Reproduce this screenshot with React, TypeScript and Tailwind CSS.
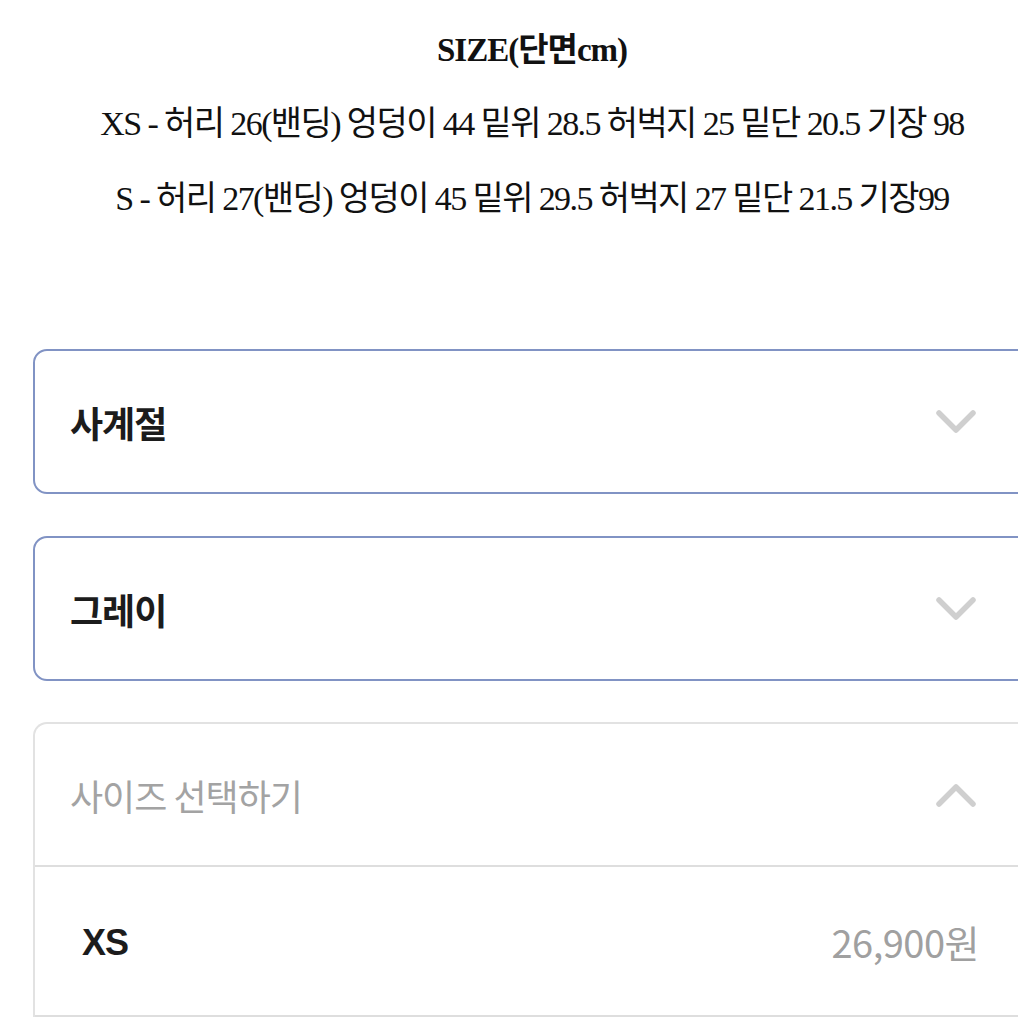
const serif = { fontFamily: '"Liberation Serif", "Noto Sans CJK KR", serif' };
const sans = { fontFamily: '"Noto Sans CJK KR", "Liberation Sans", sans-serif' };
const latin = { fontFamily: '"Liberation Sans", "Noto Sans CJK KR", sans-serif' };

const sizeRows = [
  "XS - 허리 26(밴딩) 엉덩이 44 밑위 28.5 허벅지 25 밑단 20.5 기장 98",
  "S - 허리 27(밴딩) 엉덩이 45 밑위 29.5 허벅지 27 밑단 21.5 기장99",
];

function Chevron({ up }: { up?: boolean }) {
  return (
    <svg width="40" height="26" viewBox="0 0 40 26" className="shrink-0">
      <polyline
        points={up ? "3,22 20,5 37,22" : "3,4 20,21 37,4"}
        fill="none"
        stroke="#cfcfcf"
        strokeWidth="5.5"
        strokeLinecap="round"
        strokeLinejoin="round"
      />
    </svg>
  );
}

function SelectBox({ label }: { label: string }) {
  return (
    <div className="h-[145px] rounded-[14px] border-2 border-[#8193c4] bg-white flex items-center justify-between pl-[35px] pr-[53px]">
      <span className="text-[36px] font-bold text-[#1c1c1c] tracking-[-1px]" style={sans}>
        {label}
      </span>
      <Chevron />
    </div>
  );
}

export default function App() {
  return (
    <div className="w-[1018px] h-[1018px] overflow-hidden bg-white">
      <div className="ml-[33px] w-[998px]">
        {/* Size table */}
        <div className="flex flex-col items-center text-[#111]" style={serif}>
          <h2 className="mt-[32px] text-[33px] font-bold tracking-[-1px] leading-[36px]">SIZE(단면cm)</h2>
          <p className="mt-[38px] text-[34px] tracking-[-1.6px] leading-[36px]">{sizeRows[0]}</p>
          <p className="mt-[39px] text-[34px] tracking-[-1.6px] leading-[36px]">{sizeRows[1]}</p>
        </div>

        {/* Option selectors */}
        <div className="mt-[132px] flex flex-col gap-[42px]">
          <SelectBox label="사계절" />
          <SelectBox label="그레이" />
        </div>

        <div className="mt-[41px] rounded-t-[14px] border-2 border-b-0 border-[#e2e2e2] bg-white">
          <div className="h-[143px] flex items-center justify-between pl-[35px] pr-[53px] border-b-2 border-[#dedede]">
            <span className="text-[36px] text-[#a3a3a3] tracking-[-1px]" style={sans}>
              사이즈 선택하기
            </span>
            <Chevron up />
          </div>
          <div className="h-[150px] flex items-center justify-between pl-[47px] pr-[50px] border-b-2 border-[#dedede]">
            <span className="text-[36px] font-bold text-[#1c1c1c] tracking-[-1px] pt-[4px]" style={latin}>
              XS
            </span>
            <span className="text-[38px] text-[#a0a0a0] tracking-[-0.5px]" style={sans}>
              26,900원
            </span>
          </div>
        </div>
      </div>
    </div>
  );
}
